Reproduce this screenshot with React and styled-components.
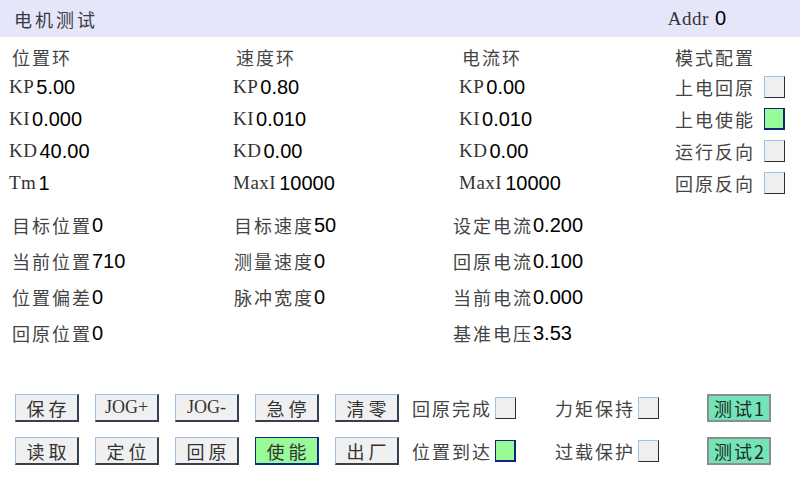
import React from "react";
import styled, { createGlobalStyle } from "styled-components";

const Global = createGlobalStyle`
  html, body { margin: 0; padding: 0; background: #fff; }
  body { width: 800px; height: 480px; overflow: hidden; }
`;

const Page = styled.div`
  width: 800px;
  height: 480px;
  background: #fff;
  display: flex;
  flex-direction: column;
  font-family: "Noto Sans CJK SC", sans-serif;
  color: #444;
`;

const Header = styled.div`
  height: 37px;
  background: #e6e6fa;
  display: flex;
  align-items: center;
  justify-content: space-between;
  padding: 0 74px 0 14px;
`;

const Title = styled.div`
  font-size: 18px;
  letter-spacing: 3px;
  color: #3a3a3a;
`;

const Addr = styled.div`
  display: flex;
  align-items: center;
`;

const Params = styled.div`
  display: grid;
  grid-template-columns: 224px 226px 216px 1fr;
  grid-template-rows: 28px repeat(4, 32px);
  padding: 6px 0 0 9px;
`;

const Middle = styled.div`
  display: grid;
  grid-template-columns: 222px 219px 1fr;
  grid-template-rows: repeat(4, 36px);
  padding: 8px 0 0 12px;
`;

const Cell = styled.div`
  display: flex;
  align-items: center;
  padding-left: ${(p) => p.$shift || 0}px;
`;

const Head = styled.span`
  font-size: 18px;
  letter-spacing: 2px;
  color: #444;
`;

const Latin = styled.span`
  font-family: "Liberation Serif", serif;
  font-size: 19px;
  letter-spacing: 0.5px;
  color: #333;
  margin-right: ${(p) => p.$gap || 2}px;
`;

const Value = styled.span`
  font-family: "Liberation Sans", Arial, sans-serif;
  font-size: 20px;
  color: #000;
`;

const Box = styled.span`
  display: inline-block;
  box-sizing: border-box;
  width: 21px;
  height: 22px;
  margin-left: ${(p) => p.$gap || 6}px;
  background: ${(p) => (p.$on ? "#98fb98" : "#efefef")};
  border: 1px solid ${(p) => (p.$on ? "#10247a" : "#2e2e2e")};
  border-top-color: ${(p) => (p.$on ? "#10247a" : "#9cc4ea")};
  border-left-color: ${(p) => (p.$on ? "#10247a" : "#9cc4ea")};
  ${(p) => p.$on && "border-width: 1px 2px 2px 1px;"}
`;

const Controls = styled.div`
  display: grid;
  grid-template-columns: repeat(5, 64px) 124px 136px 64px;
  grid-template-rows: 28px 28px;
  column-gap: 16px;
  row-gap: 15px;
  padding: 43px 0 0 15px;
`;

const Button = styled.div`
  box-sizing: border-box;
  display: flex;
  align-items: center;
  justify-content: center;
  font-size: 18px;
  letter-spacing: ${(p) => (p.$latin ? 0 : 4)}px;
  text-indent: ${(p) => (p.$latin ? 0 : 4)}px;
  color: #333;
  background: ${(p) => (p.$on ? "#98fb98" : "#f0f0f0")};
  border-style: solid;
  border-width: 1px 2px 2px 1px;
  border-color: ${(p) =>
    p.$on ? "#0c2a8c" : "#9ebfe2 #35404e #35404e #9ebfe2"};
  ${(p) => p.$latin && `font-family: "Liberation Serif", serif;`}
`;

const TestButton = styled(Button)`
  background: #74e4b8;
  border: 2px solid #8a8f8c;
  letter-spacing: 2px;
  text-indent: 2px;
  color: #1a2a22;
`;

const Flag = styled.div`
  display: flex;
  align-items: center;
  margin-left: ${(p) => p.$shift || 0}px;
`;

const topCols = [
  {
    head: "位置环",
    rows: [["KP", "5.00"], ["KI", "0.000"], ["KD", "40.00"], ["Tm", "1"]],
  },
  {
    head: "速度环",
    rows: [["KP", "0.80"], ["KI", "0.010"], ["KD", "0.00"], ["MaxI", "10000"]],
  },
  {
    head: "电流环",
    rows: [["KP", "0.00"], ["KI", "0.010"], ["KD", "0.00"], ["MaxI", "10000"]],
  },
];

const modes = [
  ["上电回原", false],
  ["上电使能", true],
  ["运行反向", false],
  ["回原反向", false],
];

const status = [
  [["目标位置", "0"], ["当前位置", "710"], ["位置偏差", "0"], ["回原位置", "0"]],
  [["目标速度", "50"], ["测量速度", "0"], ["脉冲宽度", "0"], null],
  [["设定电流", "0.200"], ["回原电流", "0.100"], ["当前电流", "0.000"], ["基准电压", "3.53"]],
];

const row1 = ["保存", "JOG+", "JOG-", "急停", "清零"];
const row2 = ["读取", "定位", "回原", "使能", "出厂"];

function ParamColumn({ col, index }) {
  const x = index + 1;
  return (
    <>
      <Cell style={{ gridColumn: x, gridRow: 1 }} $shift={3}>
        <Head>{col.head}</Head>
      </Cell>
      {col.rows.map(([k, v], i) => (
        <Cell key={k} style={{ gridColumn: x, gridRow: i + 2 }}>
          <Latin $gap={k === "MaxI" ? 3 : 2}>{k}</Latin>
          <Value>{v}</Value>
        </Cell>
      ))}
    </>
  );
}

export default function App() {
  return (
    <Page>
      <Global />
      <Header>
        <Title>电机测试</Title>
        <Addr>
          <Latin $gap={6}>Addr</Latin>
          <Value>0</Value>
        </Addr>
      </Header>

      <Params>
        {topCols.map((c, i) => (
          <ParamColumn key={c.head} col={c} index={i} />
        ))}
        <Cell style={{ gridColumn: 4, gridRow: 1 }}>
          <Head>模式配置</Head>
        </Cell>
        {modes.map(([label, on], i) => (
          <Cell key={label} style={{ gridColumn: 4, gridRow: i + 2 }}>
            <Head>{label}</Head>
            <Box $on={on} $gap={9} />
          </Cell>
        ))}
      </Params>

      <Middle>
        {status.flatMap((col, ci) =>
          col.map((item, ri) =>
            item ? (
              <Cell key={`${ci}-${ri}`} style={{ gridColumn: ci + 1, gridRow: ri + 1 }}>
                <Head>{item[0]}</Head>
                <Value>{item[1]}</Value>
              </Cell>
            ) : null
          )
        )}
      </Middle>

      <Controls>
        {row1.map((t) => (
          <Button key={t} $latin={t.startsWith("JOG")}>
            {t}
          </Button>
        ))}
        <Flag $shift={-3}>
          <Head>回原完成</Head>
          <Box $gap={3} />
        </Flag>
        <Flag>
          <Head>力矩保持</Head>
          <Box $gap={3} />
        </Flag>
        <TestButton>测试1</TestButton>

        {row2.map((t) => (
          <Button key={t} $on={t === "使能"}>
            {t}
          </Button>
        ))}
        <Flag $shift={-3}>
          <Head>位置到达</Head>
          <Box $gap={3} $on />
        </Flag>
        <Flag>
          <Head>过载保护</Head>
          <Box $gap={3} />
        </Flag>
        <TestButton>测试2</TestButton>
      </Controls>
    </Page>
  );
}
